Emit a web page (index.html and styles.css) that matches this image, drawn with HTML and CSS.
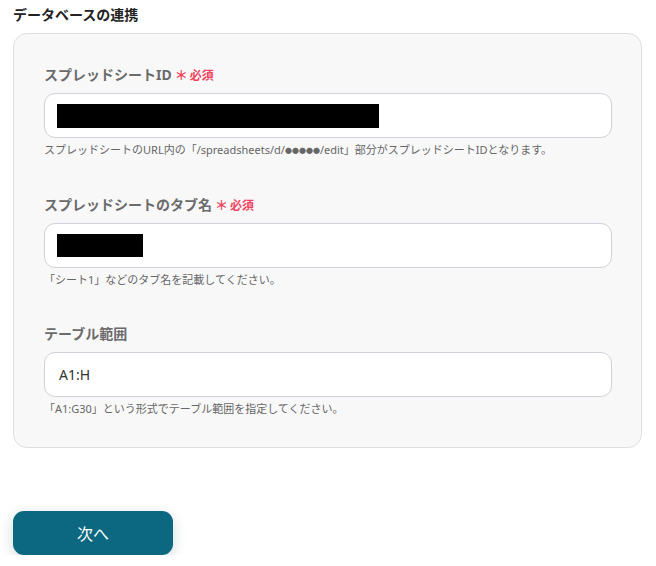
FILE: index.html
```html
<!DOCTYPE html>
<html lang="ja">
<head>
  <meta charset="UTF-8">
  <title>データベースの連携</title>
  <link rel="stylesheet" href="styles.css">
</head>
<body>
  <h2 class="section-title">データベースの連携</h2>

  <div class="card">
    <div class="field">
      <label class="label">スプレッドシートID<span class="req"><span class="star">＊</span>必須</span></label>
      <div class="input"><span class="mask mask-id"></span></div>
      <p class="help">スプレッドシートのURL内の「/spreadsheets/d/<span class="dots">●●●●●</span>/edit」部分がスプレッドシートIDとなります。</p>
    </div>

    <div class="field">
      <label class="label">スプレッドシートのタブ名<span class="req"><span class="star">＊</span>必須</span></label>
      <div class="input"><span class="mask mask-tab"></span></div>
      <p class="help">「シート1」などのタブ名を記載してください。</p>
    </div>

    <div class="field">
      <label class="label">テーブル範囲</label>
      <div class="input"><span class="value">A1:H</span></div>
      <p class="help">「A1:G30」という形式でテーブル範囲を指定してください。</p>
    </div>
  </div>

  <button class="next-btn">次へ</button>
</body>
</html>
```

FILE: styles.css
```css
body {
  margin: 0;
  padding: 5px 14px 0 13px;
  background: #fff;
  font-family: "Noto Sans", "Noto Sans CJK JP", sans-serif;
  color: #333;
}

.section-title {
  margin: 0;
  font-size: 14px;
  line-height: 20px;
  font-weight: bold;
  color: #222;
}

.card {
  margin-top: 8px;
  padding: 31px 29px 30px 30px;
  background: #f8f8f9;
  border: 1px solid #dedfe2;
  border-radius: 14px;
}

.field + .field {
  margin-top: 36px;
}

.label {
  display: flex;
  align-items: center;
  height: 20px;
  font-size: 14px;
  line-height: 20px;
  font-weight: bold;
  color: #6b6b6b;
  margin-bottom: 8px;
}

.req {
  font-size: 12px;
  line-height: 20px;
  color: #f0455f;
  margin-left: 3px;
}

.star {
  font-size: 13px;
  margin-right: 2px;
}

.input {
  height: 43px;
  background: #fff;
  border: 1px solid #cfd2d8;
  border-radius: 11px;
  padding: 0 12px;
  display: flex;
  align-items: center;
}

.mask {
  display: block;
  background: #000;
}

.mask-id {
  width: 322px;
  height: 24px;
}

.mask-tab {
  width: 86px;
  height: 23px;
}

.value {
  font-size: 14px;
  color: #333;
  padding-left: 2px;
}

.help {
  margin: 4px 0 0;
  font-size: 11px;
  line-height: 16px;
  color: #666;
}

.dots {
  font-size: 7px;
  vertical-align: 1px;
}

.next-btn {
  display: block;
  margin-top: 63px;
  width: 160px;
  height: 44px;
  border: none;
  border-radius: 11px;
  background: #0b6880;
  color: #fff;
  font-family: "Noto Sans CJK JP", sans-serif;
  font-size: 16px;
  box-shadow: 0 4px 14px rgba(0, 40, 60, 0.18);
  cursor: pointer;
}
```
